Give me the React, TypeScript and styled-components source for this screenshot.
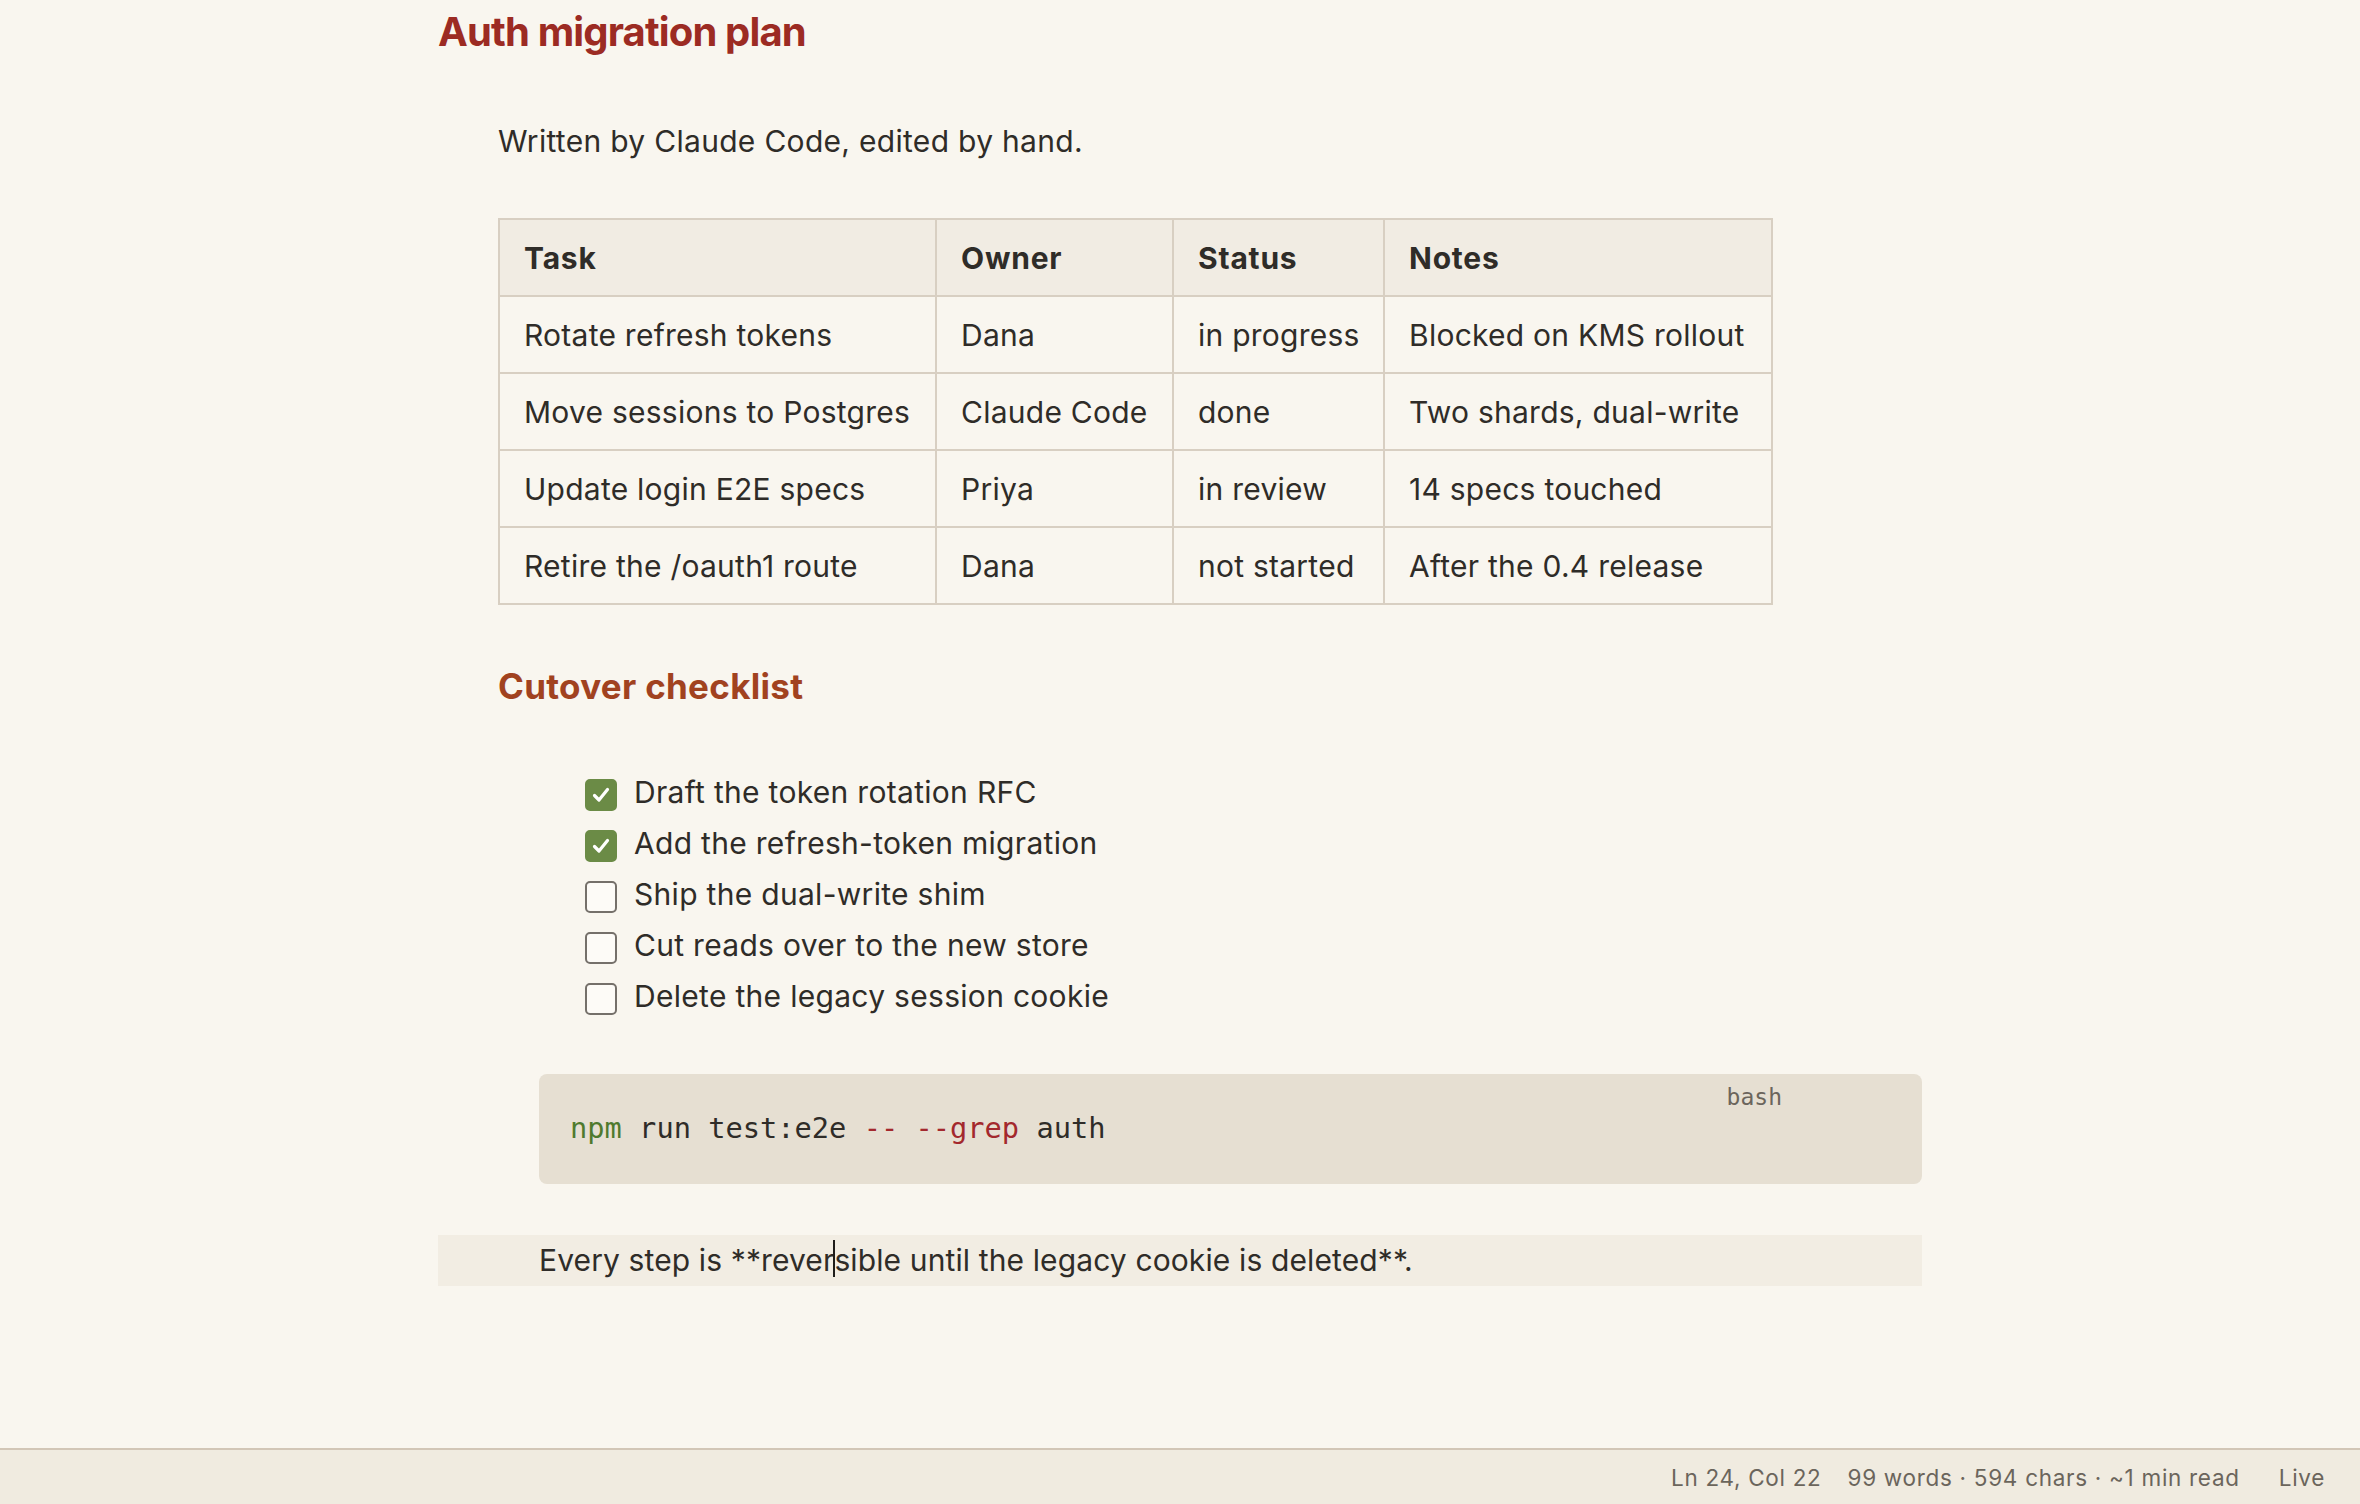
import React from "react";
import styled, { createGlobalStyle } from "styled-components";

const Global = createGlobalStyle`
  html, body { margin: 0; padding: 0; background: #f9f6ef; }
  body { font-family: Inter, "Noto Sans", sans-serif; color: #2f2c28; }
  * { box-sizing: border-box; }
`;

const Page = styled.div`
  display: flex;
  flex-direction: column;
  height: 100vh;
  background: #f9f6ef;
`;

const Editor = styled.main`
  flex: 1;
  overflow: hidden;
  padding: 7px 0 0 438px;
`;

const Doc = styled.article`
  width: 1484px;
  display: flex;
  flex-direction: column;
  align-items: flex-start;
`;

const Title = styled.h1`
  margin: 0;
  font: 700 40px/50px Inter, sans-serif;
  color: #9c2b23;
  letter-spacing: -0.85px;
`;

const Lead = styled.p`
  margin: 62px 0 0 60px;
  font: 400 30px/45px Inter, sans-serif;
  letter-spacing: 0.3px;
  color: #2f2c28;
`;

const Table = styled.table`
  margin: 54px 0 0 60px;
  width: 1273px;
  table-layout: fixed;
  border-collapse: collapse;
  font: 400 30px/45px Inter, sans-serif;
  letter-spacing: 0.25px;
  color: #2f2c28;
`;

const Th = styled.th`
  text-align: left;
  font-weight: 700;
  letter-spacing: 0.8px;
  padding: 16px 24px 14px;
  background: #f1ece3;
  border: 2px solid #d8cfc2;
`;

const Td = styled.td`
  padding: 16px 24px 14px;
  background: #f9f6ef;
  border: 2px solid #d8cfc2;
  white-space: nowrap;
`;

const Heading = styled.h2`
  margin: 59px 0 0 60px;
  font: 700 35px/44px Inter, sans-serif;
  color: #a1421f;
  letter-spacing: 0.3px;
`;

const Checklist = styled.ul`
  margin: 59px 0 0 147px;
  padding: 0;
  list-style: none;
`;

const Item = styled.li`
  display: flex;
  align-items: center;
  gap: 17px;
  height: 51px;
  font: 400 30px/51px Inter, sans-serif;
  letter-spacing: 0.3px;
  color: #2f2c28;
`;

const Box = styled.span<{ $checked: boolean }>`
  width: 32px;
  height: 32px;
  flex: none;
  margin-top: 4px;
  border-radius: 5px;
  border: 2px solid ${(p) => (p.$checked ? "#6b8b46" : "#75706a")};
  background: ${(p) => (p.$checked ? "#6b8b46" : "#fdfbf7")};
  display: flex;
  align-items: center;
  justify-content: center;
`;

const CodeBlock = styled.pre`
  position: relative;
  margin: 52px 0 0 101px;
  width: 1383px;
  padding: 32px 31px 33px;
  background: #e6dfd2;
  border-radius: 8px;
  font: 400 28.7px/45px "DejaVu Sans Mono", "Liberation Mono", monospace;
  color: #2f2c28;
`;

const Lang = styled.span`
  position: absolute;
  top: 12px;
  right: 140px;
  font: 400 23px/23px "DejaVu Sans Mono", "Liberation Mono", monospace;
  color: #6b655c;
`;

const Tok = styled.span<{ $kind: "cmd" | "flag" | "plain" }>`
  color: ${(p) =>
    p.$kind === "cmd" ? "#4f7a2e" : p.$kind === "flag" ? "#a3282d" : "#2f2c28"};
`;

const ActiveLine = styled.p`
  margin: 51px 0 0 0;
  width: 1484px;
  padding-left: 101px;
  background: #f2ede3;
  font: 400 30px/51px Inter, sans-serif;
  letter-spacing: 0.12px;
  color: #2f2c28;
`;

const Caret = styled.span`
  position: relative;
  display: inline-block;
  width: 0;
  height: 0;
  &::after {
    content: "";
    position: absolute;
    left: -1px;
    top: -31px;
    width: 2px;
    height: 37px;
    background: #1f1d1a;
  }
`;

const StatusBar = styled.footer`
  flex: none;
  height: 56px;
  border-top: 2px solid #d2c6b6;
  background: #f0ebe0;
  display: flex;
  align-items: center;
  justify-content: flex-end;
  gap: 26px;
  padding-right: 35px;
  font: 400 22.5px/1.2 Inter, sans-serif;
  letter-spacing: 0.7px;
  color: #6b655c;
`;

const Mode = styled.span`
  margin-left: 13px;
`;

const rows = [
  ["Rotate refresh tokens", "Dana", "in progress", "Blocked on KMS rollout"],
  ["Move sessions to Postgres", "Claude Code", "done", "Two shards, dual-write"],
  ["Update login E2E specs", "Priya", "in review", "14 specs touched"],
  ["Retire the /oauth1 route", "Dana", "not started", "After the 0.4 release"],
];

const tasks: [string, boolean][] = [
  ["Draft the token rotation RFC", true],
  ["Add the refresh-token migration", true],
  ["Ship the dual-write shim", false],
  ["Cut reads over to the new store", false],
  ["Delete the legacy session cookie", false],
];

const colWidths = [437, 237, 211, 388];

export default function App() {
  return (
    <Page>
      <Global />
      <Editor>
        <Doc>
          <Title>Auth migration plan</Title>
          <Lead>Written by Claude Code, edited by hand.</Lead>
          <Table>
            <colgroup>
              {colWidths.map((w, i) => (
                <col key={i} style={{ width: w }} />
              ))}
            </colgroup>
            <thead>
              <tr>
                <Th>Task</Th>
                <Th>Owner</Th>
                <Th>Status</Th>
                <Th>Notes</Th>
              </tr>
            </thead>
            <tbody>
              {rows.map((r) => (
                <tr key={r[0]}>
                  {r.map((c, i) => (
                    <Td key={i}>{c}</Td>
                  ))}
                </tr>
              ))}
            </tbody>
          </Table>
          <Heading>Cutover checklist</Heading>
          <Checklist>
            {tasks.map(([t, done]) => (
              <Item key={t}>
                <Box $checked={done}>
                  {done && (
                    <svg width="22" height="22" viewBox="0 0 22 22">
                      <path
                        d="M4.5 11.5 L9 16 L17.5 5.5"
                        fill="none"
                        stroke="#ffffff"
                        strokeWidth="3.2"
                        strokeLinecap="round"
                        strokeLinejoin="round"
                      />
                    </svg>
                  )}
                </Box>
                {t}
              </Item>
            ))}
          </Checklist>
          <CodeBlock>
            <Lang>bash</Lang>
            <Tok $kind="cmd">npm</Tok> <Tok $kind="plain">run test:e2e</Tok>{" "}
            <Tok $kind="flag">-- --grep</Tok> <Tok $kind="plain">auth</Tok>
          </CodeBlock>
          <ActiveLine>
            Every step is **rever
            <Caret />
            sible until the legacy cookie is deleted**.
          </ActiveLine>
        </Doc>
      </Editor>
      <StatusBar>
        <span>Ln 24, Col 22</span>
        <span>99 words · 594 chars · ~1 min read</span>
        <Mode>Live</Mode>
      </StatusBar>
    </Page>
  );
}
